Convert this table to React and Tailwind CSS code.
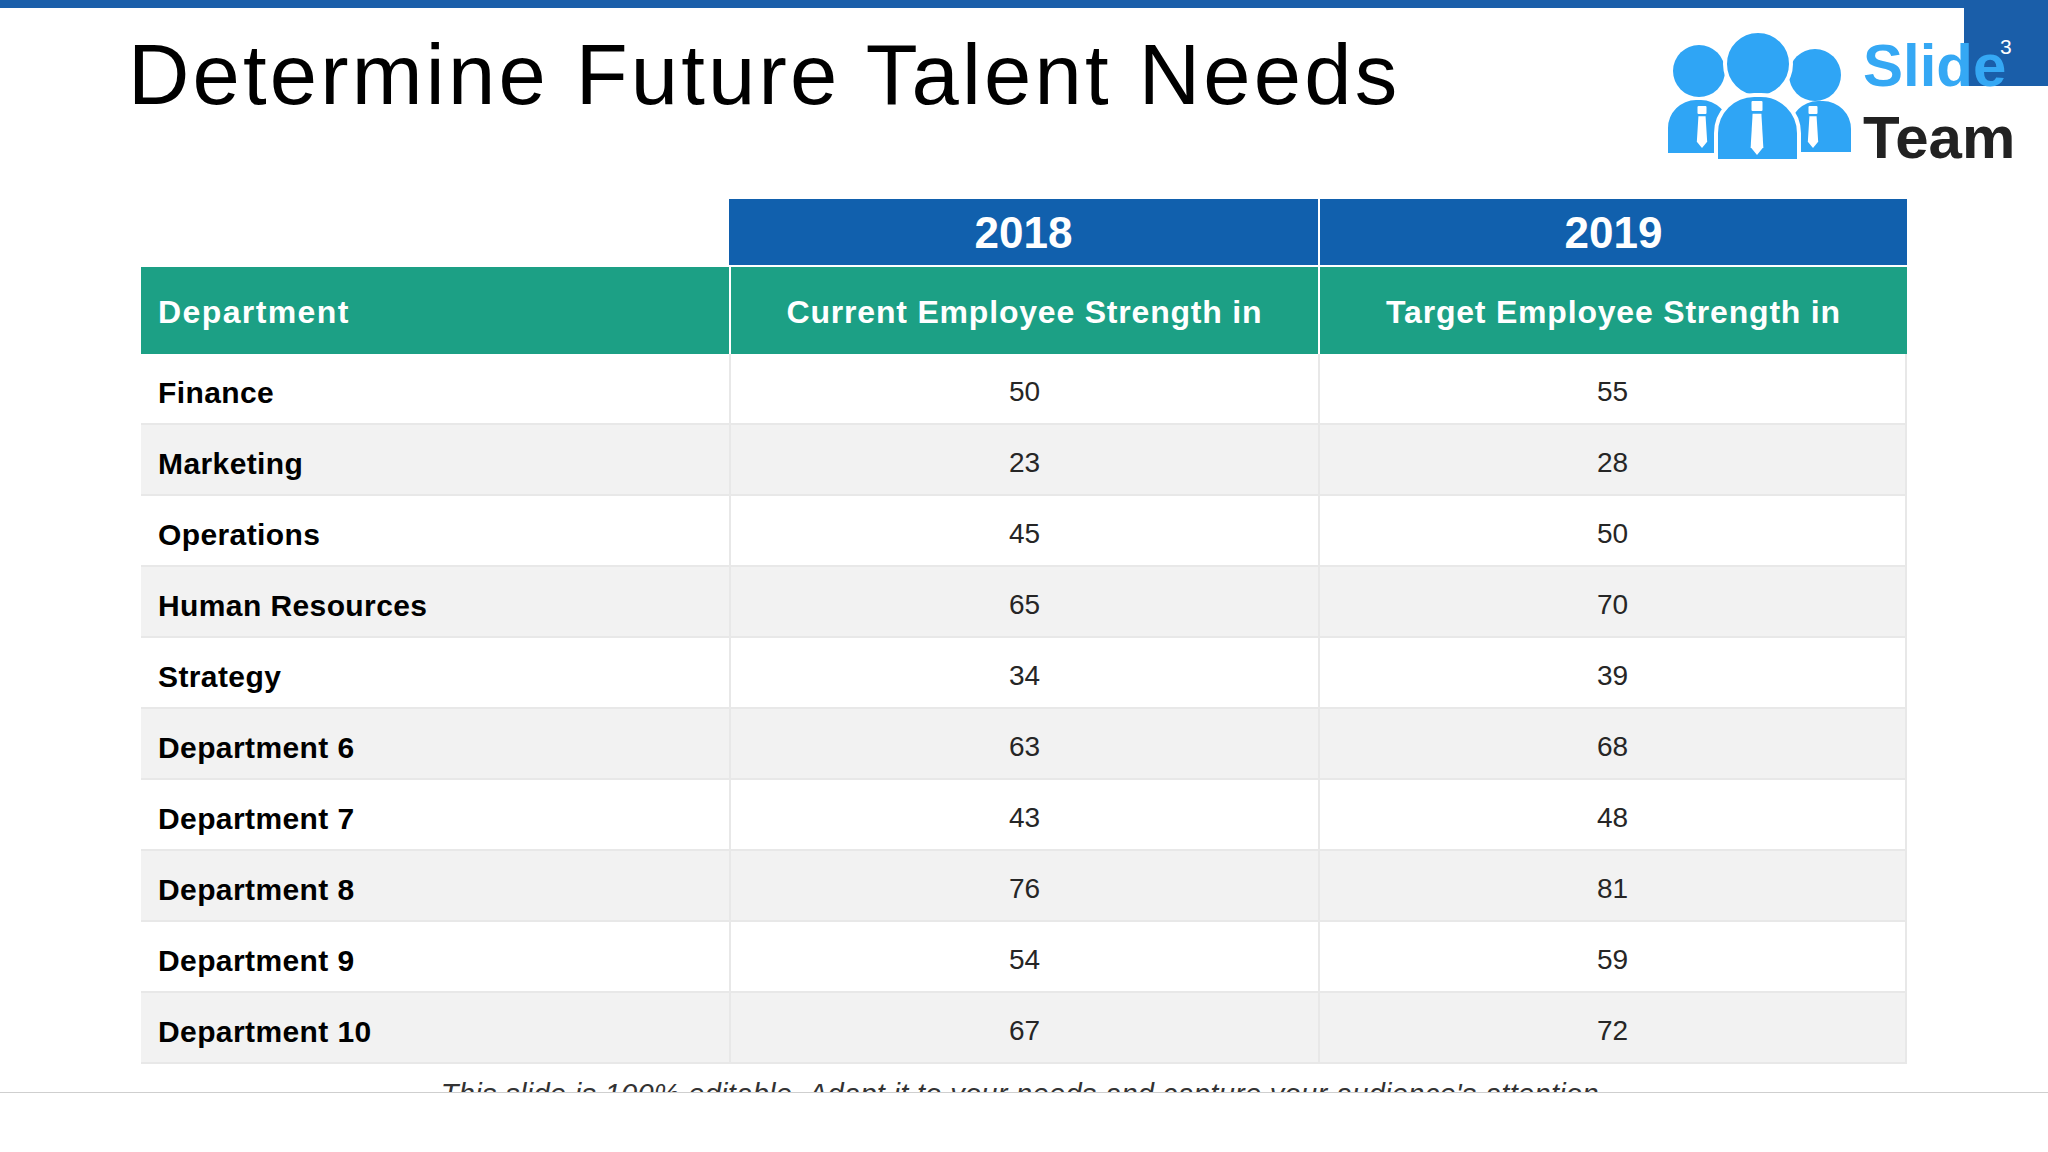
import React from "react";

const ROWS = [
  ["Finance", 50, 55],
  ["Marketing", 23, 28],
  ["Operations", 45, 50],
  ["Human Resources", 65, 70],
  ["Strategy", 34, 39],
  ["Department 6", 63, 68],
  ["Department 7", 43, 48],
  ["Department 8", 76, 81],
  ["Department 9", 54, 59],
  ["Department 10", 67, 72],
];

const sans = "font-['Liberation_Sans',Arial,sans-serif]";

function Body({ x0, x1, top, bottom }) {
  const rr = (x1 - x0) * 0.46;
  return (
    <path
      d={`M${x0} ${bottom} V${top + rr} A${rr} ${rr} 0 0 1 ${x0 + rr} ${top} H${x1 - rr} A${rr} ${rr} 0 0 1 ${x1} ${top + rr} V${bottom} Z`}
    />
  );
}

function Tie({ cx, top, len, w }) {
  const k = w * 0.5;
  return (
    <g fill="#fff" stroke="none">
      <rect x={cx - k} y={top} width={w} height={w * 0.9} rx="1" />
      <path d={`M${cx - k * 0.8} ${top + w * 1.15} L${cx + k * 0.8} ${top + w * 1.15} L${cx + k * 1.15} ${top + len - w * 0.7} L${cx} ${top + len} L${cx - k * 1.15} ${top + len - w * 0.7} Z`} />
    </g>
  );
}

function Logo() {
  return (
    <svg className="absolute left-[1660px] top-[20px]" width="200" height="145" viewBox="1660 20 200 145">
      <g fill="#2fa5f5">
        <circle cx="1699" cy="71" r="26" />
        <circle cx="1815" cy="75" r="26" />
        <Body x0={1668} x1={1729} top={100} bottom={153} />
        <Body x0={1790} x1={1851} top={101} bottom={152} />
      </g>
      <g fill="#2fa5f5" stroke="#fff" strokeWidth="4">
        <circle cx="1758" cy="64" r="33" />
        <Body x0={1716} x1={1799} top={95} bottom={161} />
      </g>
      <Tie cx={1702} top={106} len={42} w={9} />
      <Tie cx={1813} top={106} len={42} w={9} />
      <Tie cx={1757} top={101} len={54} w={11} />
    </svg>
  );
}

export default function App() {
  return (
    <div className={`relative w-[2048px] h-[1152px] bg-white overflow-hidden ${sans}`}>
      <div className="h-[8px] bg-[#1b5faa]" />
      <div className="h-[1085px] border-b border-[#cfcfcf] overflow-hidden">
        <h1 className="pl-[128px] pt-[24px] text-[85px] leading-none font-normal tracking-[3.2px] text-black">
          Determine Future Talent Needs
        </h1>

        <div className="mt-[82px] ml-[141px] w-[1766px]">
          <div className="grid grid-cols-[588px_589px_589px]">
            <div className="h-[66px]" />
            <div className="h-[66px] pt-[2px] bg-[#1160ad] flex items-center justify-center text-white font-bold text-[44px] leading-none">
              2018
            </div>
            <div className="h-[66px] pt-[2px] bg-[#1160ad] border-l-2 border-white flex items-center justify-center text-white font-bold text-[44px] leading-none">
              2019
            </div>

            <div className="h-[89px] pt-[2px] bg-[#1ca085] border-t-2 border-white flex items-center pl-[17px] text-white font-bold text-[32px] tracking-[1.4px]">
              Department
            </div>
            <div className="h-[89px] pt-[2px] bg-[#1ca085] border-t-2 border-l-2 border-white flex items-center justify-center text-white font-bold text-[32px] tracking-[0.8px]">
              Current Employee Strength in
            </div>
            <div className="h-[89px] pt-[2px] bg-[#1ca085] border-t-2 border-l-2 border-white flex items-center justify-center text-white font-bold text-[32px] tracking-[0.8px]">
              Target Employee Strength in
            </div>

            {ROWS.map(([name, a, b], i) => {
              const bg = i % 2 === 1 ? "bg-[#f2f2f2]" : "bg-white";
              return (
                <React.Fragment key={name}>
                  <div className={`h-[71px] pt-[7px] ${bg} border-b-2 border-[#e8e8e8] flex items-center pl-[17px] text-[30px] tracking-[0.4px] font-bold text-black`}>
                    {name}
                  </div>
                  <div className={`h-[71px] pt-[7px] ${bg} border-b-2 border-l-2 border-[#e8e8e8] flex items-center justify-center text-[28px] text-[#262626]`}>
                    {a}
                  </div>
                  <div className={`h-[71px] pt-[7px] ${bg} border-b-2 border-l-2 border-r-2 border-[#e8e8e8] flex items-center justify-center text-[28px] text-[#262626]`}>
                    {b}
                  </div>
                </React.Fragment>
              );
            })}
          </div>
        </div>

        <p className="mt-[16px] text-center text-[29px] leading-none italic tracking-[0.3px] text-[#333]">
          This slide is 100% editable. Adapt it to your needs and capture your audience's attention.
        </p>
      </div>

      <div className="absolute right-0 top-0 w-[84px] h-[86px] bg-[#1a5ea9]">
        <span className="absolute left-[36px] top-[36px] text-white text-[21px] leading-none">3</span>
      </div>
      <Logo />
      <div className="absolute left-[1863px] top-[36px] text-[60px] leading-none font-bold text-[#35a8f4]">Slide</div>
      <div className="absolute left-[1863px] top-[108px] text-[60px] leading-none font-bold text-[#222]">Team</div>
    </div>
  );
}
